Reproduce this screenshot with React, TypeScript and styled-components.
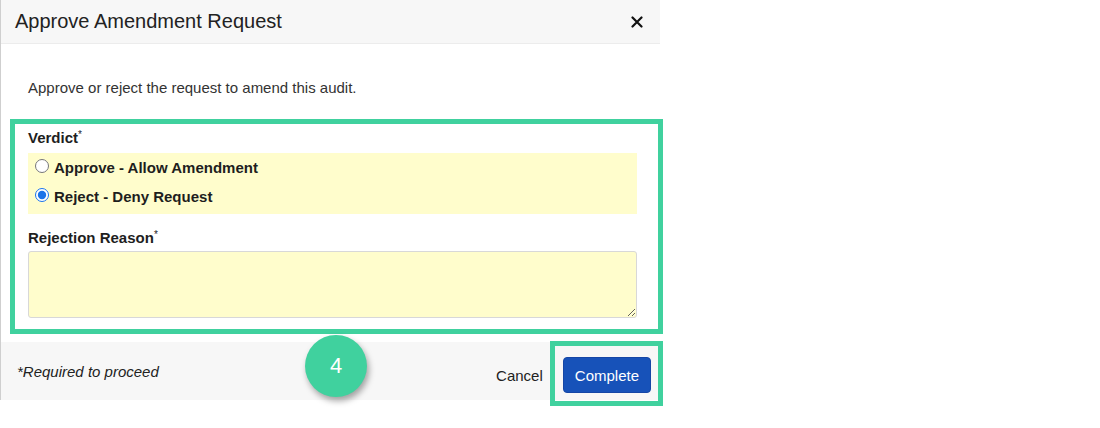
import styled, { createGlobalStyle } from 'styled-components';

const GlobalStyle = createGlobalStyle`
  html, body {
    margin: 0;
    padding: 0;
    background: #fff;
  }
  body {
    font-family: "Liberation Sans", Arial, sans-serif;
    color: #222;
  }
`

const green = '#40d19e'

export default function App() {
  return (
    <Page>
      <GlobalStyle />
      <Modal>
        <Header>
          <Title>Approve Amendment Request</Title>
          <CloseButton aria-label="Close">
            <svg width="12" height="12" viewBox="0 0 12 12">
              <path d="M1.5 1.5 L10.5 10.5 M10.5 1.5 L1.5 10.5" stroke="#111" strokeWidth="2.2" strokeLinecap="round" />
            </svg>
          </CloseButton>
        </Header>
        <Body>
          <Intro>Approve or reject the request to amend this audit.</Intro>
          <Section>
            <Label>Verdict<Req>*</Req></Label>
            <Choices>
              <Choice>
                <Radio type="radio" name="verdict" />
                Approve - Allow Amendment
              </Choice>
              <Choice>
                <Radio type="radio" name="verdict" defaultChecked />
                Reject - Deny Request
              </Choice>
            </Choices>
            <Label $spaced>Rejection Reason<Req>*</Req></Label>
            <Reason />
          </Section>
        </Body>
        <Footer>
          <Required>*Required to proceed</Required>
          <Actions>
            <CancelButton>Cancel</CancelButton>
            <Highlight>
              <CompleteButton>Complete</CompleteButton>
            </Highlight>
          </Actions>
        </Footer>
        <StepBadge>4</StepBadge>
      </Modal>
    </Page>
  )
}

const Page = styled.div`
  min-height: 428px;
  background: #fff;
`
const Modal = styled.div`
  position: relative;
  width: 659px;
  border-left: 1px solid #cfcfcf;
  display: flex;
  flex-direction: column;
`
const Header = styled.div`
  height: 43px;
  display: flex;
  align-items: center;
  justify-content: space-between;
  padding: 0 17px 0 14px;
  background: #f7f7f7;
  border-bottom: 1px solid #ececec;
`
const Title = styled.h1`
  margin: 0;
  font-size: 20px;
  font-weight: normal;
  color: #222;
`
const CloseButton = styled.button`
  border: 0;
  background: none;
  padding: 0;
  width: 12px;
  height: 12px;
  display: flex;
  cursor: pointer;
`
const Body = styled.div`
  padding: 34px 23px 24px 27px;
  background: #fff;
`
const Intro = styled.p`
  margin: 0 0 31px 0;
  font-size: 15px;
  line-height: 20px;
  color: #333;
`
const Section = styled.div`
  position: relative;
  display: flex;
  flex-direction: column;

  &::after {
    content: '';
    position: absolute;
    top: -10px;
    bottom: -16px;
    left: -18px;
    right: -26px;
    border: 5px solid ${green};
    pointer-events: none;
  }
`
const Label = styled.label<{ $spaced?: boolean }>`
  display: block;
  margin: ${p => (p.$spaced ? '15px' : '0')} 0 0 0;
  font-size: 15px;
  line-height: 18px;
  font-weight: bold;
  color: #1e1e1e;
`
const Req = styled.span`
  font-size: 10px;
  line-height: 0;
  font-weight: normal;
  vertical-align: 5px;
`
const Choices = styled.div`
  margin-top: 6px;
  padding: 0 0 3px;
  background: #fffdcc;
`
const Choice = styled.label`
  display: flex;
  align-items: center;
  height: 29px;
  font-size: 15px;
  font-weight: bold;
  color: #1e1e1e;
`
const Radio = styled.input`
  width: 14px;
  height: 14px;
  margin: 0 5px 3px 7px;
  accent-color: #1a73e8;
`
const Reason = styled.textarea`
  margin-top: 4px;
  height: 67px;
  box-sizing: border-box;
  background: #fffdcc;
  border: 1px solid #d8d8d8;
  border-radius: 3px;
  resize: vertical;
  font: inherit;
`
const Footer = styled.div`
  height: 58px;
  display: flex;
  align-items: center;
  justify-content: space-between;
  padding: 0 9px 0 16px;
  background: #f7f7f7;
`
const Required = styled.span`
  font-size: 15px;
  font-style: italic;
  color: #222;
`
const Actions = styled.div`
  display: flex;
  align-items: center;
  gap: 20px;
  margin-top: 8px;
`
const CancelButton = styled.button`
  border: 0;
  background: none;
  padding: 0;
  font: inherit;
  font-size: 15px;
  color: #222;
  cursor: pointer;
`
const Highlight = styled.span`
  position: relative;
  display: flex;

  &::after {
    content: '';
    position: absolute;
    top: -16px;
    bottom: -13px;
    left: -13px;
    right: -12px;
    border: 5px solid ${green};
    pointer-events: none;
  }
`
const CompleteButton = styled.button`
  height: 36px;
  padding: 0 11px;
  border: 1px solid #1546a6;
  border-radius: 4px;
  background: #1752b9;
  color: #fff;
  font: inherit;
  font-size: 15px;
  cursor: pointer;
`
const StepBadge = styled.div`
  position: absolute;
  left: 304px;
  top: 335px;
  width: 62px;
  height: 62px;
  border-radius: 50%;
  background: ${green};
  box-shadow: 2px 4px 6px rgba(0, 0, 0, 0.35);
  color: #fff;
  font-size: 22px;
  display: flex;
  align-items: center;
  justify-content: center;
`
